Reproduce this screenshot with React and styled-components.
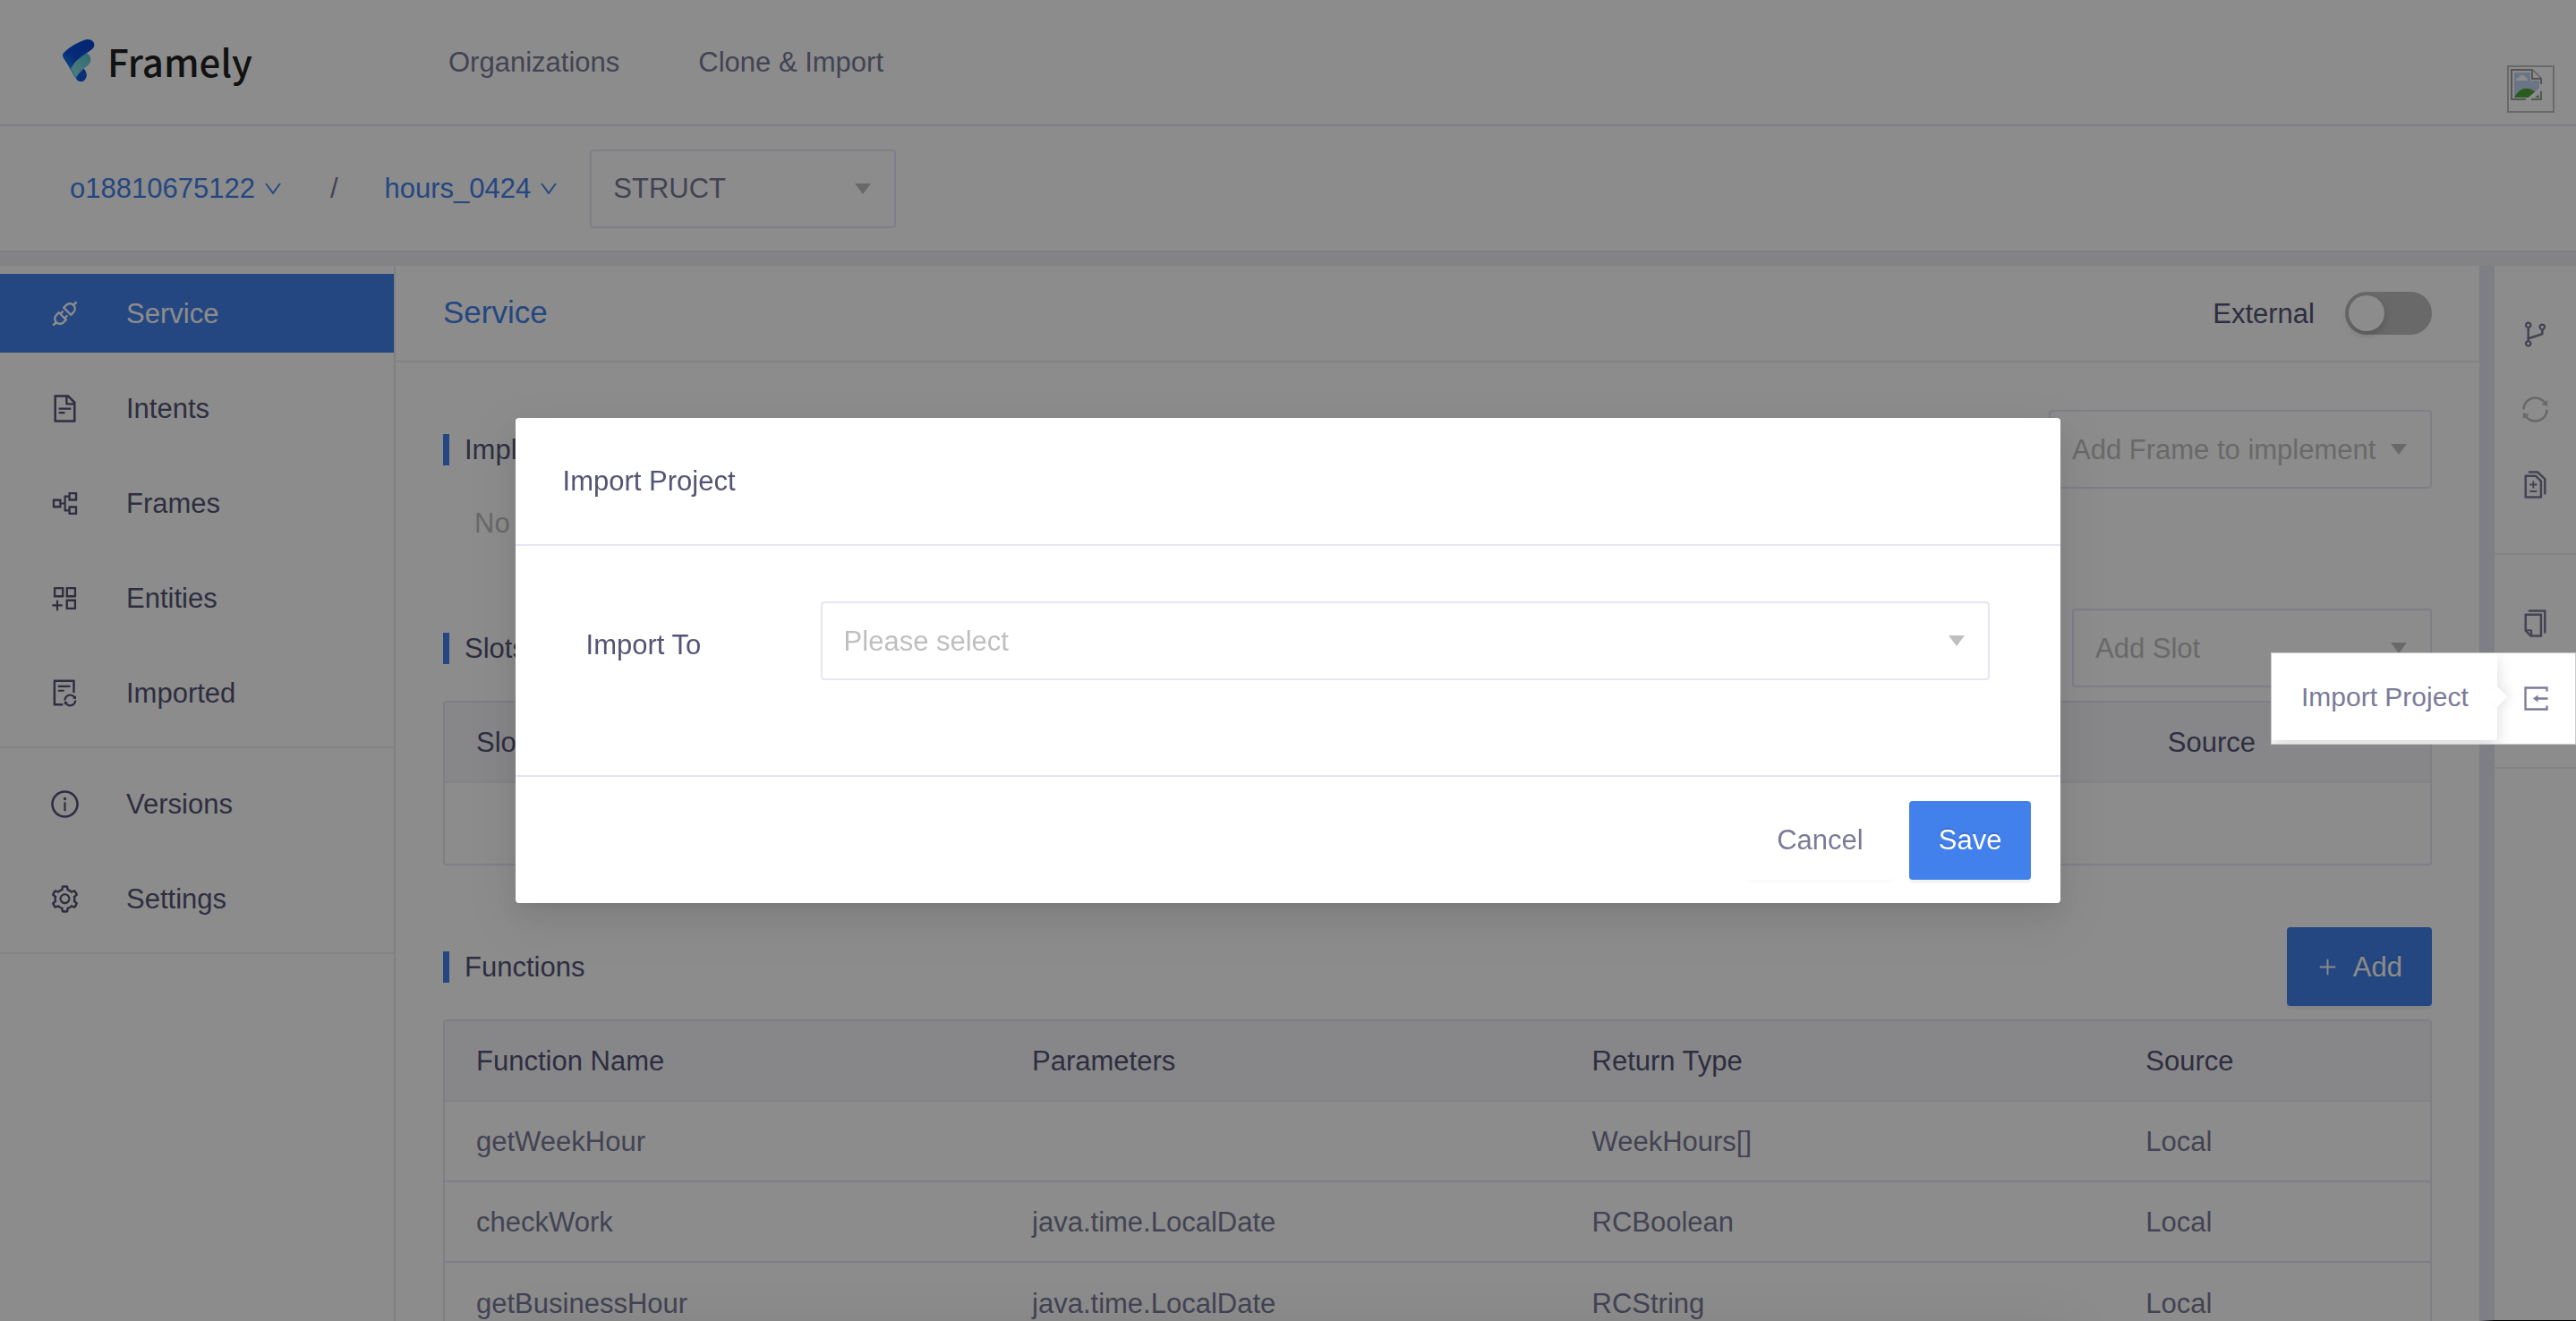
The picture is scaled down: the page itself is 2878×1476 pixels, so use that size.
import React from "react";
import styled, { createGlobalStyle, css } from "styled-components";
import {
  AiOutlineApi,
  AiOutlineAppstoreAdd,
  AiOutlineBranches,
  AiOutlineCopy,
  AiOutlineDiff,
  AiOutlineDown,
  AiOutlineFileSync,
  AiOutlineFileText,
  AiOutlineInfoCircle,
  AiOutlinePartition,
  AiOutlinePlus,
  AiOutlineSetting,
  AiOutlineSync,
} from "react-icons/ai";

const color = {
  blue: "#4281eb",
  strong: "#545475",
  muted: "#7b7b98",
  faint: "#bfbfbf",
  line: "#e6e6f5",
  softLine: "#eeeef0",
  band: "#eeeef2",
  head: "#f6f6fa",
};

const GlobalStyle = createGlobalStyle`
  *, *::before, *::after { box-sizing: border-box; }
  body {
    margin: 0;
    background: #fff;
    color: ${color.strong};
    font: 31px/35px "Liberation Sans", Arial, sans-serif;
  }
  h1, h2, p, ul { margin: 0; padding: 0; font-weight: 400; }
  ul { list-style: none; }
  a { color: inherit; text-decoration: none; }
  button, select { font: inherit; color: inherit; margin: 0; }
  svg { display: block; flex: none; }
`;

const Page = styled.div`
  display: flex;
  flex-direction: column;
  height: 100vh;
  overflow: hidden;
`;

const Header = styled.header`
  display: flex;
  align-items: center;
  flex: none;
  height: 141px;
  padding: 0 24px 0 70px;
  border-bottom: 2px solid ${color.line};
`;

const Brand = styled.a`
  display: flex;
  align-items: center;
  gap: 14px;
  width: 431px;
  padding-bottom: 4px;
  color: #222;
  font: 500 42px/60px "Noto Sans CJK SC", sans-serif;
`;

const TopNav = styled.nav`
  display: flex;
  flex: 1;
  gap: 88px;
  color: ${color.muted};
`;

const Avatar = styled.a`
  display: block;
  align-self: flex-end;
  width: 53px;
  height: 53px;
  margin-bottom: 13px;
  padding: 2px;
  border: 2px solid ${color.faint};
`;

const CrumbBar = styled.div`
  display: flex;
  align-items: center;
  flex: none;
  height: 141px;
  padding: 0 78px;
  border-bottom: 2px solid ${color.line};
`;

const Crumb = styled.button`
  display: flex;
  align-items: center;
  gap: 8px;
  padding: 0;
  border: 0;
  background: none;
  color: ${color.blue};
`;

const Slash = styled.span`
  padding: 0 52px;
  color: ${color.muted};
`;

const CrumbSelect = styled.div`
  width: 342px;
  margin-left: 34px;
`;

const SelectBox = styled.div`
  display: grid;
  align-items: center;
  width: ${(p) => p.$width || "100%"};

  > * {
    grid-area: 1 / 1;
  }

  > svg {
    justify-self: end;
    margin-right: 28px;
    pointer-events: none;
  }
`;

const NativeSelect = styled.select`
  appearance: none;
  width: 100%;
  height: 88px;
  padding: 0 24px;
  border: 2px solid ${color.line};
  border-radius: 4px;
  background: #fff;
  color: ${(p) => (p.$filled ? color.muted : color.faint)};
`;

const Body = styled.div`
  display: flex;
  flex: 1;
  min-height: 0;
  border-top: 15px solid ${color.band};
`;

const Sidebar = styled.nav`
  flex: none;
  width: 442px;
  border-right: 2px solid ${color.line};
`;

const MenuGroup = styled.ul`
  display: flex;
  flex-direction: column;
  gap: 18px;
  padding: ${(p) => (p.$first ? "9px" : "18px")} 0 16px;
  border-bottom: 2px solid ${color.softLine};
`;

const MenuLink = styled.a`
  display: flex;
  align-items: center;
  gap: 51px;
  height: 88px;
  padding-left: 55px;
  ${(p) =>
    p.$active &&
    css`
      background: ${color.blue};
      color: #fff;
    `}
`;

const Content = styled.main`
  flex: 1;
  min-width: 0;
  overflow: hidden;
`;

const ContentHeader = styled.div`
  display: flex;
  align-items: center;
  justify-content: space-between;
  height: 108px;
  padding: 0 53px;
  border-bottom: 2px solid ${color.softLine};
`;

const PageTitle = styled.h1`
  padding-bottom: 4px;
  color: ${color.blue};
  font-size: 35px;
`;

const SwitchLabel = styled.label`
  display: flex;
  align-items: center;
  gap: 34px;
`;

const Switch = styled.input`
  appearance: none;
  display: flex;
  align-items: center;
  width: 97px;
  height: 48px;
  margin: 0;
  padding: 0 4px;
  border-radius: 24px;
  background: ${color.faint};

  &::before {
    content: "";
    width: 40px;
    height: 40px;
    border-radius: 50%;
    background: #fff;
    box-shadow: 0 4px 9px rgba(0, 35, 11, 0.2);
  }
`;

const Sections = styled.div`
  display: flex;
  flex-direction: column;
  gap: 69px;
  padding: 53px;
`;

const SectionHead = styled.div`
  display: flex;
  align-items: center;
  justify-content: space-between;
  height: 88px;
`;

const SectionTitle = styled.h2`
  padding-left: 17px;
  border-left: 7px solid ${color.blue};
  font-size: 31px;
`;

const Empty = styled.p`
  padding: 21px 35px 9px;
  color: ${color.faint};
`;

const Table = styled.table`
  width: 100%;
  margin-top: 15px;
  border: 2px solid ${color.line};
  border-radius: 4px;
  border-spacing: 0;
  table-layout: fixed;
  text-align: left;

  th,
  td {
    height: 90px;
    padding: 0 35px;
    font-weight: 400;
    border-bottom: 2px solid ${color.line};
  }

  th {
    background: ${color.head};
    border-color: ${color.softLine};
  }

  td {
    color: ${color.muted};
  }

  tbody tr:last-child td {
    border-bottom: 0;
  }
`;

const Col = styled.col`
  width: ${(p) => p.$width};
`;

const Button = styled.button`
  display: flex;
  align-items: center;
  gap: 16px;
  height: 88px;
  padding: 0 33px;
  border: 0;
  border-radius: 4px;
  ${(p) =>
    p.$primary
      ? css`
          background: ${color.blue};
          color: #fff;
          box-shadow: 0 4px 0 rgba(0, 0, 0, 0.045);
          text-shadow: 0 -2px 0 rgba(0, 0, 0, 0.12);
        `
      : css`
          background: #fff;
          color: ${color.muted};
          box-shadow: 0 4px 0 rgba(0, 0, 0, 0.015);
        `}
`;

const Rail = styled.aside`
  flex: none;
  width: 108px;
  border-left: 17px solid ${color.line};
  border-bottom: 1px solid #000;
  color: ${color.muted};
`;

const RailGroup = styled.ul`
  padding: 34px 0 35px;
  border-bottom: 2px solid ${color.softLine};
`;

const RailItem = styled.li`
  position: relative;
  height: 84px;
`;

const RailButton = styled.button`
  display: flex;
  align-items: center;
  justify-content: center;
  flex: 1;
  width: 100%;
  height: 100%;
  padding: 0;
  border: 0;
  background: none;

  &:disabled {
    color: ${color.faint};
  }
`;

const Spotlight = styled.div`
  position: absolute;
  z-index: 20;
  top: -9px;
  right: 0;
  display: flex;
  align-items: flex-start;
  width: 341px;
  height: 103px;
  overflow: hidden;
  border: 1px solid #c9c9c9;
  background: #fff;
`;

const Tooltip = styled.span`
  position: relative;
  width: 252px;
  height: 97px;
  padding: 31px 33px;
  border-radius: 0 4px 4px 0;
  background: #fff;
  box-shadow: 0 7px 18px rgba(0, 0, 0, 0.15);
  font-size: 30px;
  white-space: nowrap;

  &::after {
    content: "";
    position: absolute;
    top: 40px;
    right: -8px;
    width: 17px;
    height: 17px;
    background: #fff;
    box-shadow: 4px -4px 12px rgba(0, 0, 0, 0.06);
    transform: rotate(45deg);
  }
`;

const dialogShadow = css`
  box-shadow:
    0 7px 13px -9px rgba(0, 0, 0, 0.12),
    0 13px 35px rgba(0, 0, 0, 0.08),
    0 20px 62px 18px rgba(0, 0, 0, 0.05);
`;

const Mask = styled.div`
  position: fixed;
  z-index: 10;
  inset: 0;
  display: flex;
  align-items: center;
  justify-content: center;
  background: rgba(0, 0, 0, 0.45);

  &::after {
    content: "";
    position: absolute;
    top: 100%;
    width: 60%;
    height: 88px;
    ${dialogShadow}
  }
`;

const Dialog = styled.form`
  width: 60%;
  border-radius: 4px;
  background: #fff;
  ${dialogShadow}
`;

const DialogHeader = styled.header`
  display: flex;
  align-items: center;
  height: 143px;
  padding: 0 53px;
  border-bottom: 2px solid ${color.line};
`;

const DialogTitle = styled.h2`
  font-size: 31px;
`;

const DialogBody = styled.div`
  display: grid;
  grid-template-columns: 262px 1fr;
  align-items: center;
  padding: 62px 79px 106px;
`;

const FieldLabel = styled.label`
  padding-top: 8px;
`;

const DialogFooter = styled.footer`
  display: flex;
  align-items: center;
  justify-content: flex-end;
  gap: 18px;
  height: 143px;
  padding: 0 33px;
  border-top: 2px solid ${color.line};
`;

const ICON = 35;

function Logo() {
  return (
    <svg width="36" height="48" viewBox="0 0 36 48" aria-hidden="true">
      <defs>
        <linearGradient id="wing" x1="0" y1="1" x2="1" y2="0">
          <stop offset="0" stopColor="#1b8cf2" />
          <stop offset="0.4" stopColor="#0b4fdc" />
          <stop offset="1" stopColor="#0644cc" />
        </linearGradient>
        <linearGradient id="leaf" x1="0" y1="1" x2="1" y2="0">
          <stop offset="0" stopColor="#9fe6e6" />
          <stop offset="1" stopColor="#4cc3cf" />
        </linearGradient>
      </defs>
      <path d="M12 36L23 32C26 35 27.500 38.500 26.500 42C25 48 18 49 15.500 44.500Z" fill="#1659dc" />
      <path d="M0 18L12 26L18 38L15 44C13 41 11 38 9 34Z" fill="#2aa5ee" />
      <path d="M9 32L24 14.500C29 15 32.500 20 31 25C30 28 27 30 24 32L14.500 42Z" fill="url(#leaf)" />
      <path d="M0 17C2 12 19 1 28 0C34 0 37 5 34.500 9C32 14 17 18 9 33L1 21Q0 19 0 17Z" fill="url(#wing)" />
    </svg>
  );
}

function BrokenImage() {
  return (
    <svg width="36" height="36" viewBox="0 0 36 36" aria-hidden="true">
      <path d="M1 1H24L34 11V34H1Z" fill="#fff" />
      <path d="M4 4H22V13H32V32H4Z" fill="#c5d5f5" />
      <path d="M6 13C6 10 9 10 10 9C11 6 15 6 16 9C18 9 19 11 19 13Z" fill="#fff" />
      <path d="M4 32C8 24 14 21 20 22C26 23 30 28 32 32Z" fill="#4daa35" />
      <path d="M15 36L36 18V24L23 36Z" fill="#fff" />
      <path d="M17 34H1V1H24L34 11V17M23 34H34V25" fill="none" stroke="#9b9b9b" strokeWidth="2" />
      <path d="M24 1V11H34" fill="#fff" stroke="#9b9b9b" strokeWidth="2" />
    </svg>
  );
}

function ImportIcon({ size }) {
  return (
    <svg width={size} height={size} viewBox="0 0 35 35" aria-hidden="true">
      <path
        d="M29.500 9.500V5.500H5.500V29.500H29.500V25.500M18 17.500H30.500"
        fill="none"
        stroke="currentColor"
        strokeWidth="2.300"
      />
      <path d="M14 17.500L19.500 13.500V21.500Z" fill="currentColor" />
    </svg>
  );
}

function Select({ id, label, text, filled, width }) {
  return (
    <SelectBox $width={width}>
      <NativeSelect id={id} aria-label={label} $filled={filled} defaultValue={text}>
        <option>{text}</option>
      </NativeSelect>
      <svg width="18" height="12" viewBox="0 0 18 12" aria-hidden="true">
        <path d="M0 0H18L9 12Z" fill={color.faint} />
      </svg>
    </SelectBox>
  );
}

const menu = [
  [
    ["Service", AiOutlineApi],
    ["Intents", AiOutlineFileText],
    ["Frames", AiOutlinePartition],
    ["Entities", AiOutlineAppstoreAdd],
    ["Imported", AiOutlineFileSync],
  ],
  [
    ["Versions", AiOutlineInfoCircle],
    ["Settings", AiOutlineSetting],
  ],
];

const functions = [
  ["getWeekHour", "", "WeekHours[]", "Local"],
  ["checkWork", "java.time.LocalDate", "RCBoolean", "Local"],
  ["getBusinessHour", "java.time.LocalDate", "RCString", "Local"],
];

export default function App() {
  return (
    <>
      <GlobalStyle />
      <Page>
        <Header>
          <Brand href="#home">
            <Logo />
            Framely
          </Brand>
          <TopNav>
            <a href="#organizations">Organizations</a>
            <a href="#clone">Clone &amp; Import</a>
          </TopNav>
          <Avatar href="#account" aria-label="Account">
            <BrokenImage />
          </Avatar>
        </Header>

        <CrumbBar>
          <Crumb type="button">
            o18810675122
            <AiOutlineDown size={24} />
          </Crumb>
          <Slash>/</Slash>
          <Crumb type="button">
            hours_0424
            <AiOutlineDown size={24} />
          </Crumb>
          <CrumbSelect>
            <Select label="Component type" text="STRUCT" filled />
          </CrumbSelect>
        </CrumbBar>

        <Body>
          <Sidebar>
            {menu.map((group, i) => (
              <MenuGroup key={i} $first={i === 0}>
                {group.map(([name, Icon]) => (
                  <li key={name}>
                    <MenuLink href={"#" + name.toLowerCase()} $active={name === "Service"}>
                      <Icon size={ICON} />
                      {name}
                    </MenuLink>
                  </li>
                ))}
              </MenuGroup>
            ))}
          </Sidebar>

          <Content>
            <ContentHeader>
              <PageTitle>Service</PageTitle>
              <SwitchLabel>
                External
                <Switch type="checkbox" role="switch" />
              </SwitchLabel>
            </ContentHeader>

            <Sections>
              <section>
                <SectionHead>
                  <SectionTitle>Implements</SectionTitle>
                  <Select label="Frame" text="Add Frame to implement" width="428px" />
                </SectionHead>
                <Empty>No data</Empty>
              </section>

              <section>
                <SectionHead>
                  <SectionTitle>Slots</SectionTitle>
                  <Select label="Slot" text="Add Slot" width="402px" />
                </SectionHead>
                <Table>
                  <colgroup>
                    <Col $width="85.2%" />
                    <Col />
                  </colgroup>
                  <thead>
                    <tr>
                      <th>Slot Name</th>
                      <th>Source</th>
                    </tr>
                  </thead>
                  <tbody>
                    <tr>
                      <td />
                      <td />
                    </tr>
                  </tbody>
                </Table>
              </section>

              <section>
                <SectionHead>
                  <SectionTitle>Functions</SectionTitle>
                  <Button type="button" $primary>
                    <AiOutlinePlus size={25} />
                    Add
                  </Button>
                </SectionHead>
                <Table>
                  <colgroup>
                    <Col $width="28%" />
                    <Col $width="28.2%" />
                    <Col $width="27.9%" />
                    <Col />
                  </colgroup>
                  <thead>
                    <tr>
                      <th>Function Name</th>
                      <th>Parameters</th>
                      <th>Return Type</th>
                      <th>Source</th>
                    </tr>
                  </thead>
                  <tbody>
                    {functions.map((row) => (
                      <tr key={row[0]}>
                        {row.map((cell, i) => (
                          <td key={i}>{cell}</td>
                        ))}
                      </tr>
                    ))}
                  </tbody>
                </Table>
              </section>
            </Sections>
          </Content>

          <Rail>
            <RailGroup>
              <RailItem>
                <RailButton type="button" aria-label="Branches">
                  <AiOutlineBranches size={ICON} />
                </RailButton>
              </RailItem>
              <RailItem>
                <RailButton type="button" aria-label="Sync" disabled>
                  <AiOutlineSync size={ICON} />
                </RailButton>
              </RailItem>
              <RailItem>
                <RailButton type="button" aria-label="Changes">
                  <AiOutlineDiff size={ICON} />
                </RailButton>
              </RailItem>
            </RailGroup>
            <RailGroup>
              <RailItem>
                <RailButton type="button" aria-label="Clone">
                  <AiOutlineCopy size={ICON} />
                </RailButton>
              </RailItem>
              <RailItem>
                <Spotlight>
                  <Tooltip id="import-tip" role="tooltip">
                    Import Project
                  </Tooltip>
                  <RailButton type="button" aria-labelledby="import-tip">
                    <ImportIcon size={ICON} />
                  </RailButton>
                </Spotlight>
              </RailItem>
            </RailGroup>
          </Rail>
        </Body>
      </Page>

      <Mask>
        <Dialog role="dialog" aria-labelledby="dialog-title">
          <DialogHeader>
            <DialogTitle id="dialog-title">Import Project</DialogTitle>
          </DialogHeader>
          <DialogBody>
            <FieldLabel htmlFor="import-to">Import To</FieldLabel>
            <Select id="import-to" text="Please select" />
          </DialogBody>
          <DialogFooter>
            <Button type="button">Cancel</Button>
            <Button type="submit" $primary>
              Save
            </Button>
          </DialogFooter>
        </Dialog>
      </Mask>
    </>
  );
}
